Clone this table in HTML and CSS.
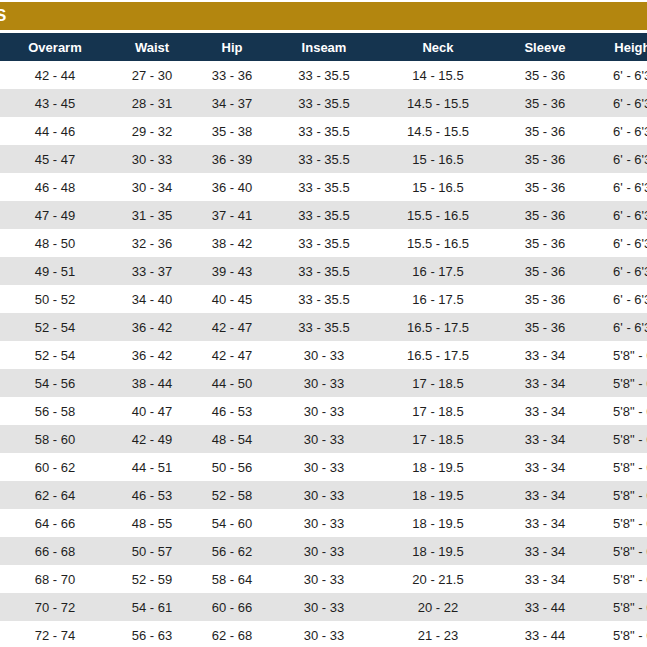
FILE: index.html
```html
<!DOCTYPE html>
<html>
<head>
<meta charset="utf-8">
<link rel="stylesheet" href="styles.css">
</head>
<body>
<div class="page">
  <div class="banner"><span class="title">S</span></div>
  <table class="sizes">
    <colgroup>
      <col class="c1"><col class="c2"><col class="c3"><col class="c4"><col class="c5"><col class="c6"><col class="c7">
    </colgroup>
    <thead>
      <tr><th>Overarm</th><th>Waist</th><th>Hip</th><th>Inseam</th><th>Neck</th><th>Sleeve</th><th>Height</th></tr>
    </thead>
    <tbody>
      <tr><td>42 - 44</td><td>27 - 30</td><td>33 - 36</td><td>33 - 35.5</td><td>14 - 15.5</td><td>35 - 36</td><td>6' - 6'3"</td></tr>
      <tr><td>43 - 45</td><td>28 - 31</td><td>34 - 37</td><td>33 - 35.5</td><td>14.5 - 15.5</td><td>35 - 36</td><td>6' - 6'3"</td></tr>
      <tr><td>44 - 46</td><td>29 - 32</td><td>35 - 38</td><td>33 - 35.5</td><td>14.5 - 15.5</td><td>35 - 36</td><td>6' - 6'3"</td></tr>
      <tr><td>45 - 47</td><td>30 - 33</td><td>36 - 39</td><td>33 - 35.5</td><td>15 - 16.5</td><td>35 - 36</td><td>6' - 6'3"</td></tr>
      <tr><td>46 - 48</td><td>30 - 34</td><td>36 - 40</td><td>33 - 35.5</td><td>15 - 16.5</td><td>35 - 36</td><td>6' - 6'3"</td></tr>
      <tr><td>47 - 49</td><td>31 - 35</td><td>37 - 41</td><td>33 - 35.5</td><td>15.5 - 16.5</td><td>35 - 36</td><td>6' - 6'3"</td></tr>
      <tr><td>48 - 50</td><td>32 - 36</td><td>38 - 42</td><td>33 - 35.5</td><td>15.5 - 16.5</td><td>35 - 36</td><td>6' - 6'3"</td></tr>
      <tr><td>49 - 51</td><td>33 - 37</td><td>39 - 43</td><td>33 - 35.5</td><td>16 - 17.5</td><td>35 - 36</td><td>6' - 6'3"</td></tr>
      <tr><td>50 - 52</td><td>34 - 40</td><td>40 - 45</td><td>33 - 35.5</td><td>16 - 17.5</td><td>35 - 36</td><td>6' - 6'3"</td></tr>
      <tr><td>52 - 54</td><td>36 - 42</td><td>42 - 47</td><td>33 - 35.5</td><td>16.5 - 17.5</td><td>35 - 36</td><td>6' - 6'3"</td></tr>
      <tr><td>52 - 54</td><td>36 - 42</td><td>42 - 47</td><td>30 - 33</td><td>16.5 - 17.5</td><td>33 - 34</td><td>5'8" - 6'</td></tr>
      <tr><td>54 - 56</td><td>38 - 44</td><td>44 - 50</td><td>30 - 33</td><td>17 - 18.5</td><td>33 - 34</td><td>5'8" - 6'</td></tr>
      <tr><td>56 - 58</td><td>40 - 47</td><td>46 - 53</td><td>30 - 33</td><td>17 - 18.5</td><td>33 - 34</td><td>5'8" - 6'</td></tr>
      <tr><td>58 - 60</td><td>42 - 49</td><td>48 - 54</td><td>30 - 33</td><td>17 - 18.5</td><td>33 - 34</td><td>5'8" - 6'</td></tr>
      <tr><td>60 - 62</td><td>44 - 51</td><td>50 - 56</td><td>30 - 33</td><td>18 - 19.5</td><td>33 - 34</td><td>5'8" - 6'</td></tr>
      <tr><td>62 - 64</td><td>46 - 53</td><td>52 - 58</td><td>30 - 33</td><td>18 - 19.5</td><td>33 - 34</td><td>5'8" - 6'</td></tr>
      <tr><td>64 - 66</td><td>48 - 55</td><td>54 - 60</td><td>30 - 33</td><td>18 - 19.5</td><td>33 - 34</td><td>5'8" - 6'</td></tr>
      <tr><td>66 - 68</td><td>50 - 57</td><td>56 - 62</td><td>30 - 33</td><td>18 - 19.5</td><td>33 - 34</td><td>5'8" - 6'</td></tr>
      <tr><td>68 - 70</td><td>52 - 59</td><td>58 - 64</td><td>30 - 33</td><td>20 - 21.5</td><td>33 - 34</td><td>5'8" - 6'</td></tr>
      <tr><td>70 - 72</td><td>54 - 61</td><td>60 - 66</td><td>30 - 33</td><td>20 - 22</td><td>33 - 44</td><td>5'8" - 6'</td></tr>
      <tr><td>72 - 74</td><td>56 - 63</td><td>62 - 68</td><td>30 - 33</td><td>21 - 23</td><td>33 - 44</td><td>5'8" - 6'</td></tr>
    </tbody>
  </table>
</div>
</body>
</html>
```
FILE: styles.css
```css
html, body {
  margin: 0;
  padding: 0;
  background: #ffffff;
  overflow: hidden;
}
.page {
  width: 647px;
  height: 647px;
  overflow: hidden;
  padding-top: 2px;
  font-family: "Liberation Sans", Arial, sans-serif;
}
.banner {
  height: 28px;
  background: #b3860f;
  display: flex;
  align-items: center;
  margin-bottom: 3px;
}
.title {
  color: #ffffff;
  font-weight: bold;
  font-size: 17px;
  margin-left: -5px;
}
.sizes {
  border-collapse: collapse;
  table-layout: fixed;
  width: 677px;
}
.c1 { width: 110px; }
.c2 { width: 84px; }
.c3 { width: 76px; }
.c4 { width: 108px; }
.c5 { width: 120px; }
.c6 { width: 94px; }
.c7 { width: 85px; }
.sizes th {
  background: #15344f;
  color: #ffffff;
  font-size: 13px;
  font-weight: bold;
  height: 28px;
  padding: 0;
  text-align: center;
  white-space: nowrap;
}
.sizes td {
  height: 28px;
  padding: 0;
  font-size: 13px;
  color: #1e1e1e;
  text-align: center;
  white-space: nowrap;
}
.sizes tbody tr:nth-child(even) td {
  background: #e3e3e3;
}
```
